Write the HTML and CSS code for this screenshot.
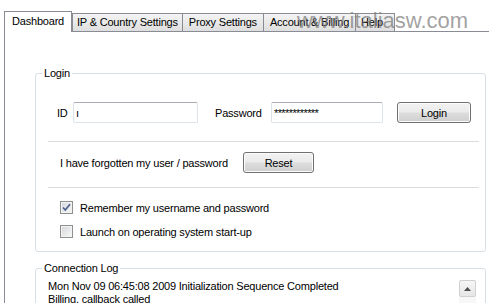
FILE: index.html
```html
<!DOCTYPE html>
<html lang="en">
<head>
    <meta charset="UTF-8">
    <meta name="viewport" content="width=device-width, initial-scale=1.0">
    <title>Dashboard</title>
    <link rel="stylesheet" href="styles.css">
</head>
<body>
    <div class="window">
        <div class="tabs">
            <div class="tab active">Dashboard</div>
            <div class="tab">IP &amp; Country Settings</div>
            <div class="tab tab-wide">Proxy Settings</div>
            <div class="tab tab-wide">Account &amp; Billing</div>
            <div class="tab tab-help">Help</div>
        </div>

        <div class="tab-panel">
            <fieldset class="group login-group">
                <legend>Login</legend>

                <div class="login-row">
                    <label for="userId" class="lbl-id">ID</label>
                    <input type="text" id="userId" class="textbox textbox-id" value="ı">
                    <label for="userPass" class="lbl-pass">Password</label>
                    <input type="text" id="userPass" class="textbox textbox-pass" value="************">
                    <button type="button" class="btn btn-login">Login</button>
                </div>

                <div class="separator"></div>

                <div class="forgot-row">
                    <span class="forgot-text">I have forgotten my user / password</span>
                    <button type="button" class="btn btn-reset">Reset</button>
                </div>

                <div class="separator separator-low"></div>

                <label class="check-row check-first">
                    <span class="checkbox">
                        <svg width="11" height="11" viewBox="0 0 11 11">
                            <path d="M2 5.5 L4.3 8 L9 2.3" fill="none" stroke="#4a5e8c" stroke-width="1.6"/>
                        </svg>
                    </span>
                    Remember my username and password
                </label>
                <label class="check-row">
                    <span class="checkbox"></span>
                    Launch on operating system start-up
                </label>
            </fieldset>

            <fieldset class="group log-group">
                <legend>Connection Log</legend>
                <div class="log">
                    <div class="log-lines">
                        <div>Mon Nov 09 06:45:08 2009 Initialization Sequence Completed</div>
                        <div>Billing, callback called</div>
                    </div>
                    <div class="scrollbar">
                        <div class="scroll-up">
                            <svg width="7" height="4" viewBox="0 0 7 4">
                                <path d="M0 4 L3.5 0 L7 4 Z" fill="#505050"/>
                            </svg>
                        </div>
                    </div>
                </div>
            </fieldset>
        </div>

        <!-- watermark over the tab strip -->
        <div class="watermark">www.italiasw.com</div>
    </div>
</body>
</html>
```

FILE: styles.css
```css
* {
    margin: 0;
    padding: 0;
    box-sizing: border-box;
}

html, body {
    overflow: hidden;
}

body {
    font-family: "Liberation Sans", Arial, sans-serif;
    font-size: 11px;
    letter-spacing: -0.2px;
    color: #000;
    background: #fff;
}

.window {
    position: relative;
    width: 489px;
    height: 303px;
}

/* tab strip */
.tabs {
    display: flex;
    align-items: flex-end;
    padding: 11px 0 0 4px;
}

.tab {
    height: 18px;
    line-height: 17px;
    padding: 0 4px;
    margin-left: -1px;
    border: 1px solid #898c95;
    border-bottom: none;
    background: linear-gradient(#f4f4f4, #e9e9e9 50%, #dedede);
    white-space: nowrap;
}

.tab.active {
    position: relative;
    z-index: 1;
    height: 21px;
    line-height: 18px;
    margin-left: 0;
    margin-right: 1px;
    margin-bottom: -1px;
    padding: 0 7px;
    background: #fff;
}

.tab-wide {
    padding: 0 6px;
}

.tab-help {
    width: 40px;
    padding: 0 5px;
}

.tab-panel {
    margin-left: 4px;
    border-top: 1px solid #898c95;
    border-left: 1px solid #898c95;
    padding: 34px 3px 0 30px;
}

/* group boxes */
.group {
    border: 1px solid #d5dfe5;
    border-radius: 3px;
    padding: 0 0 13px;
}

.group legend {
    margin-left: 6px;
    padding: 0 2px;
    line-height: 14px;
}

.login-row,
.forgot-row {
    display: flex;
    align-items: center;
    height: 21px;
}

.login-row {
    margin-top: 22px;
    padding-left: 21px;
}

.lbl-id {
    width: 16px;
}

.lbl-pass {
    width: 56px;
}

.textbox {
    height: 21px;
    padding: 0 2px;
    border: 1px solid #dde3ea;
    border-top-color: #abadb3;
    border-radius: 2px;
    font: inherit;
    letter-spacing: inherit;
    color: #000;
    outline: none;
}

.textbox-id {
    width: 125px;
    margin-right: 17px;
}

.textbox-pass {
    width: 112px;
    margin-right: 14px;
    letter-spacing: -0.6px;
}

.btn {
    height: 21px;
    border: 1px solid #707070;
    border-radius: 3px;
    background: linear-gradient(#f2f2f2, #ebebeb 48%, #dddddd 52%, #cfcfcf);
    box-shadow: inset 0 0 0 1px #fcfcfc;
    font: inherit;
    letter-spacing: inherit;
    color: #000;
}

.btn-login {
    width: 74px;
}

.btn-reset {
    width: 71px;
}

.separator {
    border-top: 1px solid #dcdcdc;
    margin: 18px 6px 0 12px;
}

.separator-low {
    margin-top: 14px;
}

.forgot-row {
    margin-top: 10px;
    padding-left: 24px;
}

.forgot-text {
    width: 183px;
}

.check-row {
    display: flex;
    align-items: center;
    height: 13px;
    margin-top: 11px;
    padding-left: 24px;
}

.check-first {
    margin-top: 13px;
}

.checkbox {
    display: flex;
    align-items: center;
    justify-content: center;
    width: 13px;
    height: 13px;
    margin-right: 7px;
    border: 1px solid #8e8f8f;
    background: linear-gradient(135deg, #d3d6da, #f8f8f8);
    box-shadow: inset 0 0 0 1px #f3f3f3;
}

/* connection log */
.log-group {
    margin-top: 9px;
    height: 80px;
}

.log {
    display: flex;
    margin: 5px 9px 0 12px;
}

.log-lines {
    flex: 1;
    line-height: 13px;
    white-space: nowrap;
}

.scrollbar {
    width: 17px;
    height: 40px;
    background: #f7f7f7;
}

.scroll-up {
    display: flex;
    align-items: center;
    justify-content: center;
    height: 17px;
    border: 1px solid #d0d0d0;
    border-radius: 2px;
    background: linear-gradient(#f6f6f6, #e6e6e6);
}

.watermark {
    position: absolute;
    left: 297px;
    top: 10px;
    font-size: 22px;
    line-height: 22px;
    letter-spacing: 0;
    color: rgba(120, 120, 120, 0.7);
    pointer-events: none;
}
```
